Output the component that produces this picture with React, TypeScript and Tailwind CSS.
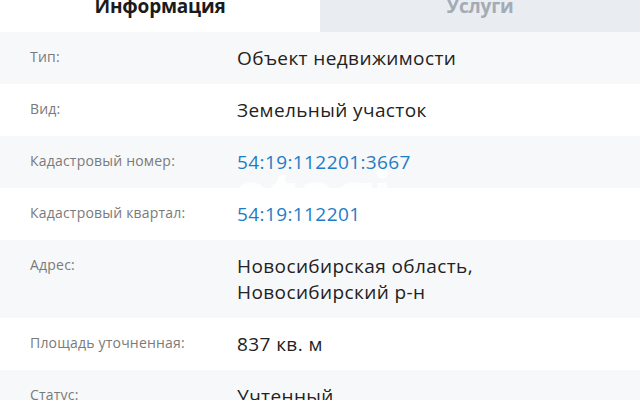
import React from 'react';

type Row = { label: string; value: string[]; link?: boolean };

const rows: Row[] = [
  { label: 'Тип:', value: ['Объект недвижимости'] },
  { label: 'Вид:', value: ['Земельный участок'] },
  { label: 'Кадастровый номер:', value: ['54:19:112201:3667'], link: true },
  { label: 'Кадастровый квартал:', value: ['54:19:112201'], link: true },
  { label: 'Адрес:', value: ['Новосибирская область,', 'Новосибирский р-н'] },
  { label: 'Площадь уточненная:', value: ['837 кв. м'] },
  { label: 'Статус:', value: ['Учтенный'] },
];

const App = () => {
  return (
    <div className="w-[640px] h-[400px] overflow-hidden bg-white font-['Open_Sans',sans-serif]">
      {/* вкладки */}
      <div className="flex h-[32px]">
        <div className="flex-1 flex justify-center bg-white">
          <span className="text-[19px] leading-[18px] font-bold text-[#1b1b1b] tracking-[-0.2px] -mt-[3px]">
            Информация
          </span>
        </div>
        <div className="flex-1 flex justify-center bg-[#e9ecf0]">
          <span className="text-[19px] leading-[18px] font-bold text-[#a3abb6] tracking-[-0.2px] -mt-[3px]">
            Услуги
          </span>
        </div>
      </div>

      {/* таблица */}
      <div className="flex flex-col">
        {rows.map((row, i) => (
          <div
            key={row.label}
            className={`relative overflow-hidden flex items-start px-[30px] py-[13px] ${
              i % 2 === 0 ? 'bg-[#f7f8fa]' : 'bg-white'
            }`}
          >
            {i === 2 && (
              <span className="absolute left-[232px] top-[26px] text-[64px] leading-none font-bold text-white/80 select-none">
                etagi
              </span>
            )}
            <div className="w-[207px] shrink-0 text-[14px] leading-[20px] pt-[2px] tracking-[0.2px] text-[#7a7a7a]">
              {row.label}
            </div>
            <div
              className={`relative text-[19px] leading-[26px] tracking-[0.4px] ${
                row.link ? 'text-[#1f7cc4]' : 'text-[#222222]'
              }`}
            >
              {row.value.map((line) => (
                <div key={line}>{line}</div>
              ))}
            </div>
          </div>
        ))}
      </div>
    </div>
  );
};

export default App;
